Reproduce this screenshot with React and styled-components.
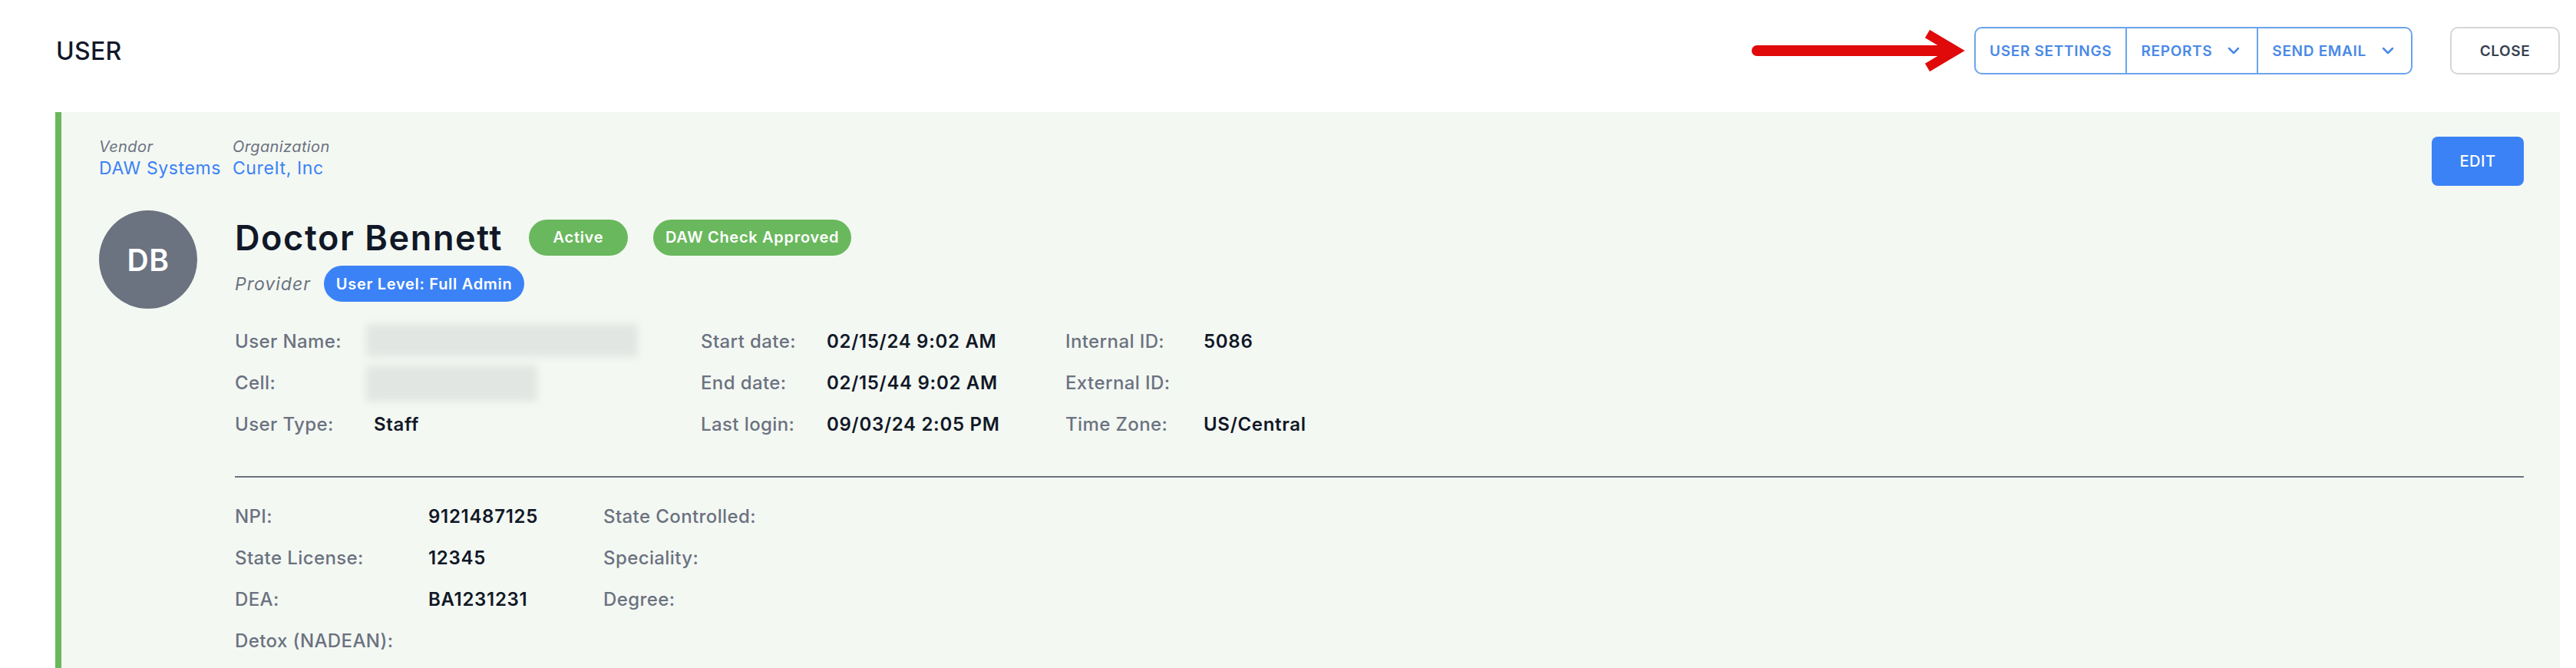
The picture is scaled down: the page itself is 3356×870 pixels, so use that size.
import React from "react";
import styled, { createGlobalStyle } from "styled-components";
import { ChevronDown } from "lucide-react";

const GlobalStyle = createGlobalStyle`
  * {
    box-sizing: border-box;
  }
  body {
    margin: 0;
    background: #ffffff;
    font-family: Inter, "Noto Sans", sans-serif;
    color: #111827;
  }
`;

const Page = styled.div`
  padding: 35px 21px 0 72px;
`;

const Header = styled.header`
  display: flex;
  align-items: center;
  justify-content: space-between;
  height: 62px;
`;

const Title = styled.h1`
  margin: 0;
  padding-left: 1px;
  font-size: 32px;
  font-weight: 500;
  letter-spacing: 0.3px;
  color: #111827;
`;

const Actions = styled.div`
  display: flex;
  align-items: center;
`;

const Arrow = styled.svg`
  display: block;
  margin-right: 12px;
`;

const ButtonGroup = styled.div`
  display: flex;
  height: 62px;
  border: 2px solid #6aa4ec;
  border-radius: 10px;
  overflow: hidden;
`;

const GroupButton = styled.button`
  display: flex;
  align-items: center;
  gap: 16px;
  padding: 0 18px;
  border: 0;
  border-left: ${(p) => (p.$first ? "0" : "2px solid #6aa4ec")};
  background: transparent;
  color: #4a89e6;
  font-family: Inter, sans-serif;
  font-size: 19px;
  font-weight: 600;
  letter-spacing: 0.7px;
  text-transform: uppercase;
  cursor: pointer;
`;

const CloseButton = styled.button`
  margin-left: 49px;
  width: 143px;
  height: 62px;
  border: 2px solid #d4d6da;
  border-radius: 10px;
  background: #ffffff;
  color: #374151;
  font-family: Inter, sans-serif;
  font-size: 19px;
  font-weight: 600;
  letter-spacing: 0.6px;
  cursor: pointer;
`;

const Card = styled.section`
  margin-top: 49px;
  background: #f4f8f3;
  border-left: 8px solid #6ab85d;
  padding: 32px 47px 40px 49px;
`;

const CardTop = styled.div`
  display: flex;
  justify-content: space-between;
  align-items: flex-start;
`;

const Meta = styled.div`
  display: flex;
  gap: 15px;
`;

const MetaItem = styled.div`
  display: flex;
  flex-direction: column;
`;

const MetaLabel = styled.span`
  font-size: 20px;
  line-height: 26px;
  font-style: italic;
  letter-spacing: 0.4px;
  color: #6b7280;
`;

const MetaLink = styled.a`
  font-size: 23px;
  line-height: 30px;
  letter-spacing: 0.6px;
  color: #3b82f6;
  text-decoration: none;
`;

const EditButton = styled.button`
  width: 120px;
  height: 64px;
  border: 0;
  border-radius: 8px;
  background: #3b82f6;
  color: #ffffff;
  font-family: Inter, sans-serif;
  font-size: 20px;
  font-weight: 500;
  letter-spacing: 0.5px;
  cursor: pointer;
`;

const Profile = styled.div`
  display: flex;
  gap: 49px;
  margin-top: 32px;
`;

const Avatar = styled.div`
  flex-shrink: 0;
  width: 128px;
  height: 128px;
  border-radius: 50%;
  background: #6b7280;
  color: #ffffff;
  display: flex;
  align-items: center;
  justify-content: center;
  font-size: 39px;
  font-weight: 600;
  letter-spacing: 0.5px;
`;

const Details = styled.div`
  flex: 1;
  display: flex;
  flex-direction: column;
`;

const NameRow = styled.div`
  display: flex;
  align-items: center;
  height: 70px;
  gap: 34px;
`;

const Name = styled.h2`
  margin: 0;
  font-size: 45px;
  font-weight: 600;
  letter-spacing: 1.6px;
  color: #111827;
`;

const Badges = styled.div`
  display: flex;
  gap: 33px;
`;

const Badge = styled.span`
  display: inline-flex;
  align-items: center;
  justify-content: center;
  height: 47px;
  min-width: ${(p) => p.$minw || 0}px;
  padding: 0 16px;
  border-radius: 24px;
  background: ${(p) => (p.$tone === "blue" ? "#3b82f6" : "#6ab85d")};
  color: #ffffff;
  font-size: 20px;
  font-weight: 600;
  letter-spacing: 0.7px;
`;

const SubRow = styled.div`
  display: flex;
  align-items: center;
  gap: 17px;
  margin-top: 2px;
`;

const Role = styled.span`
  font-size: 23px;
  font-style: italic;
  letter-spacing: 1px;
  color: #6b7280;
`;

const InfoGrid = styled.div`
  display: grid;
  grid-template-columns: ${(p) => p.$cols};
  row-gap: 20px;
  margin-top: ${(p) => p.$mt}px;
  font-size: 24px;
  line-height: 34px;
  font-weight: 500;
`;

const Label = styled.div`
  color: #6b7280;
  letter-spacing: 0.4px;
  white-space: nowrap;
`;

const Value = styled.div`
  color: #111827;
  font-weight: 600;
  letter-spacing: 0.7px;
  white-space: nowrap;
  height: 34px;
`;

const BlurBox = styled.div`
  width: ${(p) => p.$w}px;
  height: ${(p) => p.$h}px;
  margin: ${(p) => p.$mt}px 0 ${(p) => 34 - p.$h - p.$mt}px -10px;
  background: #e2e6e2;
  border-radius: 4px;
  filter: blur(5px);
`;

const Divider = styled.hr`
  margin: 50px 0 0;
  border: 0;
  height: 2px;
  background: #6b7280;
`;

const topRows = [
  [["User Name:", { blur: [354, 43, -6] }], ["Start date:", "02/15/24 9:02 AM"], ["Internal ID:", "5086"]],
  [["Cell:", { blur: [223, 47, -6] }], ["End date:", "02/15/44 9:02 AM"], ["External ID:", ""]],
  [["User Type:", "Staff"], ["Last login:", "09/03/24 2:05 PM"], ["Time Zone:", "US/Central"]],
];

const bottomRows = [
  [["NPI:", "9121487125"], ["State Controlled:", ""]],
  [["State License:", "12345"], ["Speciality:", ""]],
  [["DEA:", "BA1231231"], ["Degree:", ""]],
  [["Detox (NADEAN):", ""], ["", ""]],
];

function renderRows(rows) {
  return rows.flatMap((row, ri) =>
    row.flatMap(([label, value], ci) => [
      <Label key={`l-${ri}-${ci}`}>{label}</Label>,
      <Value key={`v-${ri}-${ci}`}>
        {typeof value === "object" ? (
          <BlurBox $w={value.blur[0]} $h={value.blur[1]} $mt={value.blur[2]} />
        ) : (
          value
        )}
      </Value>,
    ])
  );
}

export default function App() {
  return (
    <>
      <GlobalStyle />
      <Page>
        <Header>
          <Title>USER</Title>
          <Actions>
            <Arrow width="280" height="54" viewBox="0 0 280 54">
              <line x1="9" y1="27" x2="262" y2="27" stroke="#e00a0a" strokeWidth="14" strokeLinecap="round" />
              <polyline points="231,5 268,27 231,49" fill="none" stroke="#e00a0a" strokeWidth="12" strokeLinejoin="miter" strokeLinecap="butt" />
            </Arrow>
            <ButtonGroup>
              <GroupButton $first>User Settings</GroupButton>
              <GroupButton>
                Reports <ChevronDown size={24} strokeWidth={2.5} />
              </GroupButton>
              <GroupButton>
                Send Email <ChevronDown size={24} strokeWidth={2.5} />
              </GroupButton>
            </ButtonGroup>
            <CloseButton>CLOSE</CloseButton>
          </Actions>
        </Header>

        <Card>
          <CardTop>
            <Meta>
              <MetaItem>
                <MetaLabel>Vendor</MetaLabel>
                <MetaLink href="#">DAW Systems</MetaLink>
              </MetaItem>
              <MetaItem>
                <MetaLabel>Organization</MetaLabel>
                <MetaLink href="#">CureIt, Inc</MetaLink>
              </MetaItem>
            </Meta>
            <EditButton>EDIT</EditButton>
          </CardTop>

          <Profile>
            <Avatar>DB</Avatar>
            <Details>
              <NameRow>
                <Name>Doctor Bennett</Name>
                <Badges>
                  <Badge $minw={129}>Active</Badge>
                  <Badge>DAW Check Approved</Badge>
                </Badges>
              </NameRow>
              <SubRow>
                <Role>Provider</Role>
                <Badge $tone="blue">User Level: Full Admin</Badge>
              </SubRow>

              <InfoGrid $cols="181px 426px 164px 311px 180px 1fr" $mt={35}>
                {renderRows(topRows)}
              </InfoGrid>

              <Divider />

              <InfoGrid $cols="252px 228px 1fr 0px" $mt={34}>
                {renderRows(bottomRows)}
              </InfoGrid>
            </Details>
          </Profile>
        </Card>
      </Page>
    </>
  );
}
